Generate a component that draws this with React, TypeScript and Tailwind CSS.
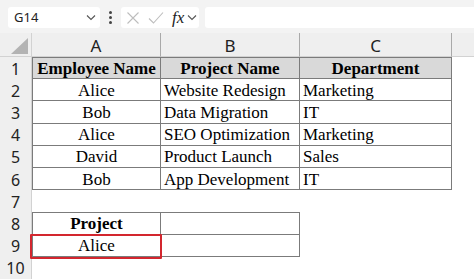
import { ReactNode } from "react";

const COLS = ["A", "B", "C"];

const ROWS: [string, string, string][] = [
  ["Alice", "Website Redesign", "Marketing"],
  ["Bob", "Data Migration", "IT"],
  ["Alice", "SEO Optimization", "Marketing"],
  ["David", "Product Launch", "Sales"],
  ["Bob", "App Development", "IT"],
];

const line = "border-[#7b7b7b]";

function Chevron({ className = "" }: { className?: string }) {
  return (
    <svg width="10" height="7" viewBox="0 0 10 7" className={className}>
      <path d="M1 1.5l4 4 4-4" fill="none" stroke="#555" strokeWidth="1.1" />
    </svg>
  );
}

function RowHead({ n }: { n: number }) {
  return (
    <div className="flex items-center justify-center pt-[1px] bg-[#efefef] border-r border-[#d2d2d2] text-[16px] text-[#222] font-['Noto_Sans',sans-serif]">
      {n}
    </div>
  );
}

function Cell({
  children,
  className = "",
}: {
  children?: ReactNode;
  className?: string;
}) {
  return (
    <div
      className={`flex items-center pt-[1px] overflow-hidden whitespace-nowrap text-[17px] leading-none text-black font-['Liberation_Serif',serif] ${className}`}
    >
      {children}
    </div>
  );
}

export default function App() {
  return (
    <div className="w-[474px] h-[279px] overflow-hidden bg-white relative">
      {/* Barre de formule */}
      <div className="h-[33px] bg-[#f3f3f3] flex items-center pt-[2px] font-['Noto_Sans',sans-serif]">
        <div className="ml-[8px] w-[92px] h-[21px] bg-white rounded-[3px] flex items-center justify-between pl-[6px] pr-[4px] text-[13px] text-[#222]">
          <span>G14</span>
          <Chevron />
        </div>
        <div className="w-[21px] flex flex-col items-center gap-[2px]">
          <span className="w-[3px] h-[3px] bg-[#444] rounded-full" />
          <span className="w-[3px] h-[3px] bg-[#444] rounded-full" />
          <span className="w-[3px] h-[3px] bg-[#444] rounded-full" />
        </div>
        <div className="w-[78px] h-[21px] bg-white rounded-[3px] flex items-center pl-[5px]">
          <svg width="14" height="14" viewBox="0 0 14 14">
            <path d="M1.5 1.5l11 11M12.5 1.5l-11 11" stroke="#bdbdbd" strokeWidth="1.1" />
          </svg>
          <svg width="16" height="14" viewBox="0 0 16 14" className="ml-[8px]">
            <path d="M1 7.5l4.5 4.5L15 1.5" fill="none" stroke="#bdbdbd" strokeWidth="1.1" />
          </svg>
          <span className="ml-[8px] text-[17px] italic text-[#222] font-['Liberation_Serif',serif] leading-none">
            fx
          </span>
          <Chevron className="ml-[3px]" />
        </div>
        <div className="ml-[6px] flex-1 h-[21px] bg-white rounded-l-[3px]" />
      </div>

      {/* Feuille */}
      <div className="grid grid-cols-[32px_129px_139px_152px_1fr] grid-rows-[24px_repeat(10,22.2px)]">
        {/* En-têtes de colonnes */}
        <div className="bg-[#efefef] border-r border-b border-[#d2d2d2] flex items-end justify-end pr-[3px] pb-[2px]">
          <svg width="17" height="16" viewBox="0 0 17 16">
            <path d="M17 0V16H0Z" fill="#b3b3b3" />
          </svg>
        </div>
        {COLS.map((c) => (
          <div
            key={c}
            className="bg-[#efefef] border-r border-b border-r-[#a9a9a9] border-b-[#d2d2d2] flex items-center justify-center pt-[2px] text-[17px] text-[#222] font-['Noto_Sans',sans-serif]"
          >
            {c}
          </div>
        ))}
        <div className="bg-[#efefef] border-b border-[#d2d2d2]" />

        {/* Ligne 1 : en-tête du tableau */}
        <RowHead n={1} />
        <Cell className={`justify-center font-bold bg-[#d9d9d9] border ${line}`}>
          Employee Name
        </Cell>
        <Cell className={`justify-center font-bold bg-[#d9d9d9] border-y border-r ${line}`}>
          Project Name
        </Cell>
        <Cell className={`justify-center font-bold bg-[#d9d9d9] border-y border-r ${line}`}>
          Department
        </Cell>
        <div />

        {/* Lignes 2 à 6 */}
        {ROWS.map((r, i) => (
          <div key={i} className="contents">
            <RowHead n={i + 2} />
            <Cell className={`justify-center border-x border-b ${line}`}>{r[0]}</Cell>
            <Cell className={`pl-[3px] border-r border-b ${line}`}>{r[1]}</Cell>
            <Cell className={`pl-[3px] border-r border-b ${line}`}>{r[2]}</Cell>
            <div />
          </div>
        ))}

        {/* Ligne 7 */}
        <RowHead n={7} />
        <div className="col-span-4" />

        {/* Lignes 8 et 9 : recherche */}
        <RowHead n={8} />
        <Cell className={`justify-center font-bold border ${line}`}>Project</Cell>
        <Cell className={`border-y border-r ${line}`} />
        <div className="col-span-2" />

        <RowHead n={9} />
        <Cell className={`justify-center border-x border-b ${line}`}>Alice</Cell>
        <Cell className={`border-r border-b ${line}`} />
        <div className="col-span-2" />

        <RowHead n={10} />
        <div className="col-span-4" />
      </div>

      {/* Cellule sélectionnée */}
      <div className="absolute left-[30px] top-[234px] w-[132px] h-[25px] border-[2.5px] border-[#d3262e] rounded-[1px]" />
    </div>
  );
}
